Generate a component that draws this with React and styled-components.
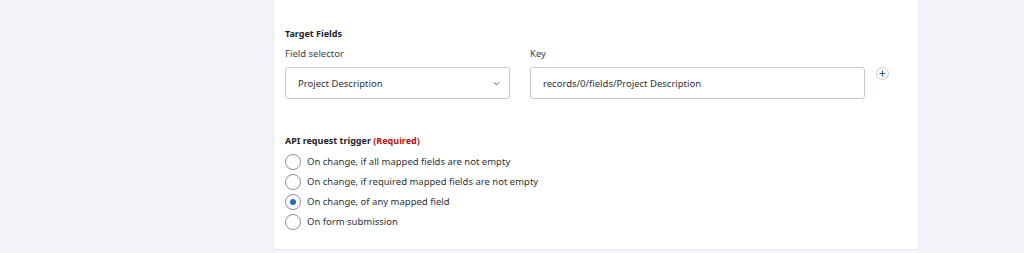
import React, { useState } from "react";
import styled, { createGlobalStyle } from "styled-components";

const GlobalStyle = createGlobalStyle`
  html, body {
    margin: 0;
    padding: 0;
    background: #f3f5fa;
    font-family: "Noto Sans", "Open Sans", sans-serif;
    color: #1e1e1e;
  }
`;

const Page = styled.div`
  width: 1024px;
  height: 253px;
  overflow: hidden;
  display: flex;
  justify-content: flex-start;
  padding-left: 273px;
  box-sizing: border-box;
`;

const Card = styled.div`
  width: 646px;
  height: 250px;
  box-sizing: border-box;
  background: #fff;
  border: 1px solid #e6e8ee;
  border-top: none;
  border-radius: 0 0 3px 3px;
  padding: 27px 12px 0 11px;
`;

const Heading = styled.div`
  font-size: 9px;
  font-weight: 700;
  line-height: 14px;
  color: #1d2327;
`;

const Required = styled.span`
  color: #c00f0f;
`;

const FieldsRow = styled.div`
  display: flex;
  align-items: flex-start;
  gap: 20px;
  margin-top: 6px;
`;

const Column = styled.div`
  display: flex;
  flex-direction: column;
  width: ${(p) => p.width}px;
`;

const Label = styled.div`
  font-size: 9.5px;
  line-height: 14px;
  color: #3c434a;
  margin-bottom: 6px;
`;

const Box = styled.div`
  height: 32px;
  box-sizing: border-box;
  border: 1px solid #c6c7d3;
  border-radius: 3px;
  display: flex;
  align-items: center;
  justify-content: space-between;
  padding: 0 8px 0 12px;
  font-size: 9.5px;
  color: #2c3338;
`;

const Chevron = styled.svg`
  width: 9px;
  height: 9px;
  margin-top: 1px;
`;

const AddButton = styled.button`
  width: 13px;
  height: 13px;
  border: 1px solid #c9cad5;
  border-radius: 50%;
  background: #fff;
  padding: 0;
  margin: 20px 0 0 -9px;
  display: flex;
  align-items: center;
  justify-content: center;
  cursor: pointer;
`;

const TriggerBlock = styled.div`
  margin-top: 35px;
`;

const RadioList = styled.div`
  display: flex;
  flex-direction: column;
  gap: 4px;
  margin-top: 6px;
`;

const RadioRow = styled.label`
  display: flex;
  align-items: center;
  gap: 6px;
  font-size: 9.5px;
  line-height: 16px;
  color: #2c3338;
  cursor: pointer;
`;

const RadioCircle = styled.span`
  width: 16px;
  height: 16px;
  box-sizing: border-box;
  border: 1px solid #8c8ea6;
  border-radius: 50%;
  display: flex;
  align-items: center;
  justify-content: center;
  background: #fff;
  &::after {
    content: "";
    width: 6px;
    height: 6px;
    border-radius: 50%;
    background: ${(p) => (p.checked ? "#2271b1" : "transparent")};
  }
`;

const options = [
  "On change, if all mapped fields are not empty",
  "On change, if required mapped fields are not empty",
  "On change, of any mapped field",
  "On form submission",
];

export default function App() {
  const [selected, setSelected] = useState(2);

  return (
    <>
      <GlobalStyle />
      <Page>
        <Card>
          <Heading>Target Fields</Heading>
          <FieldsRow>
            <Column width={225}>
              <Label>Field selector</Label>
              <Box>
                Project Description
                <Chevron viewBox="0 0 10 10">
                  <path d="M2 3.5 L5 6.5 L8 3.5" fill="none" stroke="#50575e" strokeWidth="1.1" />
                </Chevron>
              </Box>
            </Column>
            <Column width={335}>
              <Label>Key</Label>
              <Box>records/0/fields/Project Description</Box>
            </Column>
            <AddButton aria-label="Add field">
              <svg width="7" height="7" viewBox="0 0 7 7">
                <path d="M3.5 0.5 V6.5 M0.5 3.5 H6.5" stroke="#2c5f8a" strokeWidth="1.2" />
              </svg>
            </AddButton>
          </FieldsRow>
          <TriggerBlock>
            <Heading>
              API request trigger <Required>(Required)</Required>
            </Heading>
            <RadioList>
              {options.map((text, i) => (
                <RadioRow key={text} onClick={() => setSelected(i)}>
                  <RadioCircle checked={selected === i} />
                  {text}
                </RadioRow>
              ))}
            </RadioList>
          </TriggerBlock>
        </Card>
      </Page>
    </>
  );
}
